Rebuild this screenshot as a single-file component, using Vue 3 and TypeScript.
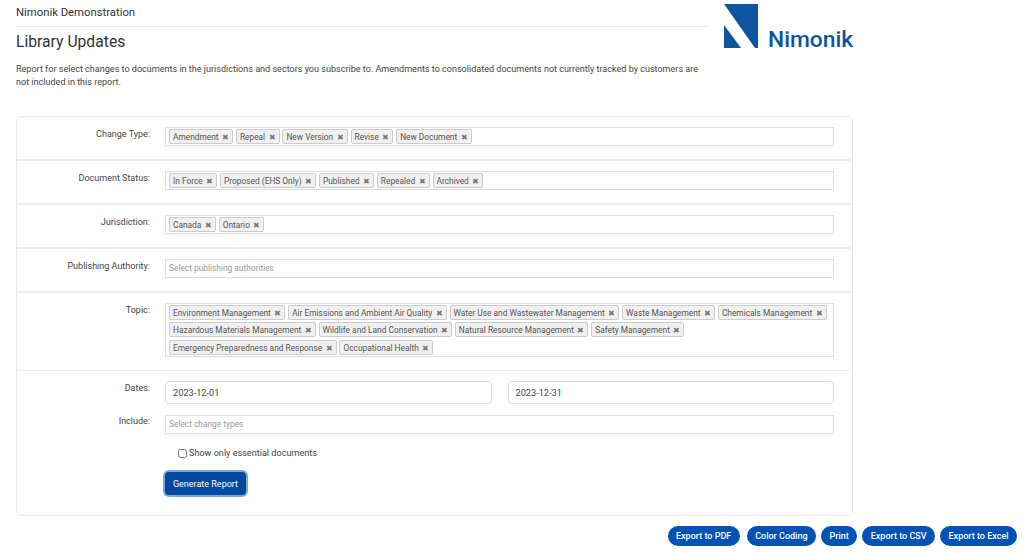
<script setup lang="ts">
interface Row { label: string; tags: string[]; placeholder?: string }
const rows: Row[] = [
  { label: 'Change Type:', tags: ['Amendment', 'Repeal', 'New Version', 'Revise', 'New Document'] },
  { label: 'Document Status:', tags: ['In Force', 'Proposed (EHS Only)', 'Published', 'Repealed', 'Archived'] },
  { label: 'Jurisdiction:', tags: ['Canada', 'Ontario'] },
  { label: 'Publishing Authority:', tags: [], placeholder: 'Select publishing authorities' },
  { label: 'Topic:', tags: ['Environment Management', 'Air Emissions and Ambient Air Quality', 'Water Use and Wastewater Management', 'Waste Management', 'Chemicals Management', 'Hazardous Materials Management', 'Wildlife and Land Conservation', 'Natural Resource Management', 'Safety Management', 'Emergency Preparedness and Response', 'Occupational Health'] },
]
const exportsList = ['Export to PDF', 'Color Coding', 'Print', 'Export to CSV', 'Export to Excel']
</script>

<template>
  <div class="page">
    <header class="top">
      <div class="intro">
        <div class="org">Nimonik Demonstration</div>
        <h1>Library Updates</h1>
        <p>Report for select changes to documents in the jurisdictions and sectors you subscribe to. Amendments to consolidated documents not currently tracked by customers are not included in this report.</p>
      </div>
      <div class="logo">
        <svg width="34" height="44" viewBox="0 0 34 44" aria-hidden="true">
          <path d="M0 0H34V44H31L0 0Z" fill="#0d559f" />
          <path d="M0 21L17 44H0Z" fill="#0d559f" />
        </svg>
        <span>Nimonik</span>
      </div>
    </header>

    <section class="card">
      <div v-for="row in rows" :key="row.label" class="row">
        <label class="lbl">{{ row.label }}</label>
        <div class="select">
          <span v-for="t in row.tags" :key="t" class="tag">{{ t }}<b>✖</b></span>
          <span v-if="row.placeholder" class="ph">{{ row.placeholder }}</span>
        </div>
      </div>
      <div class="row last">
        <div class="line">
          <label class="lbl">Dates:</label>
          <div class="dates">
            <div class="date">2023-12-01</div>
            <div class="date">2023-12-31</div>
          </div>
        </div>
        <div class="line inc">
          <label class="lbl">Include:</label>
          <div class="select"><span class="ph">Select change types</span></div>
        </div>
        <label class="check"><input type="checkbox" />Show only essential documents</label>
        <button class="generate" type="button">Generate Report</button>
      </div>
    </section>

    <div class="exports">
      <button v-for="e in exportsList" :key="e" type="button">{{ e }}</button>
    </div>
  </div>
</template>

<style>
html, body { margin: 0; background: #fff; overflow: hidden; }
</style>

<style scoped>
.page { width: 1024px; height: 554px; box-sizing: border-box; padding: 0 7px 0 16px; font-family: Roboto, "Liberation Sans", sans-serif; color: #444; overflow: hidden; }
.top { display: flex; width: 838px; height: 116px; }
.intro { width: 692px; }
.org { height: 26px; line-height: 26px; font-size: 11.3px; color: #333; border-bottom: 1px solid #e9e9e9; }
h1 { margin: 5px 0 0; font-size: 15.7px; font-weight: 400; line-height: 20px; color: #333; }
p { margin: 11px 0 0; width: 690px; font-size: 9.05px; line-height: 13px; color: #444; }
.logo { margin: 4px 0 0 16px; display: flex; align-items: flex-end; gap: 10px; height: 44px; }
.logo svg { display: block; flex: none; }
.logo span { font-size: 22.8px; line-height: 22px; font-weight: 500; color: #0d559f; margin-right: -6px; position: relative; top: 3px; }
.card { width: 837px; height: 400px; box-sizing: border-box; border: 1px solid #e8e8e8; border-radius: 6px; }
.row { display: flex; align-items: flex-start; padding: 10px 18px 0 0; height: 44px; box-sizing: border-box; border-bottom: 2px solid #ececec; }
.row:nth-child(5) { height: 78px; border-bottom-width: 1px; }
.lbl { width: 133px; flex: none; text-align: right; font-size: 9px; line-height: 14px; color: #444; margin-right: 15px; }
.inc .lbl { line-height: 12px; }
.select { flex: 1; min-height: 19px; box-sizing: border-box; border: 1px solid #ddd; padding: 1px 3px; display: flex; flex-wrap: wrap; gap: 2.4px 2.8px; align-items: center; }
.tag { height: 15px; line-height: 14px; font-size: 8.35px; color: #555; background: #f0f0f0; border: 1px solid #ccc; border-radius: 2px; padding: 0 3px; box-sizing: border-box; white-space: nowrap; }
.tag b { font-size: 8px; font-weight: 400; color: #777; margin-left: 3.5px; }
.ph { font-size: 8.35px; line-height: 15px; color: #999; }
.last { display: block; height: auto; border: 0; padding: 10px 18px 0 0; }
.line { display: flex; align-items: flex-start; }
.dates { flex: 1; display: flex; gap: 16px; }
.date { flex: 1; height: 23px; box-sizing: border-box; border: 1px solid #ddd; border-radius: 4px; font-size: 9.2px; line-height: 21px; padding-left: 7px; color: #444; }
.inc { margin-top: 11px; }
.check { display: flex; align-items: center; margin: 11px 0 0 161px; height: 16px; font-size: 9.1px; color: #444; }
.check input { width: 9px; height: 9px; margin: 0 2px 0 0; }
.generate { display: block; margin: 11px 0 0 148px; width: 81px; height: 23px; border: 0; border-radius: 4px; background: #0049a0; color: #fff; font: 400 9px Roboto, sans-serif; box-shadow: 0 0 0 2px #7fa6d6; padding: 0; }
.exports { display: flex; justify-content: flex-end; gap: 5px; margin-top: 10px; }
.exports button { height: 20px; padding: 0 8.5px; border: 0; border-radius: 10px; background: #0052b4; color: #fff; font: 500 9px Roboto, sans-serif; }
.exports button:first-child { margin-right: 2px; }
</style>
